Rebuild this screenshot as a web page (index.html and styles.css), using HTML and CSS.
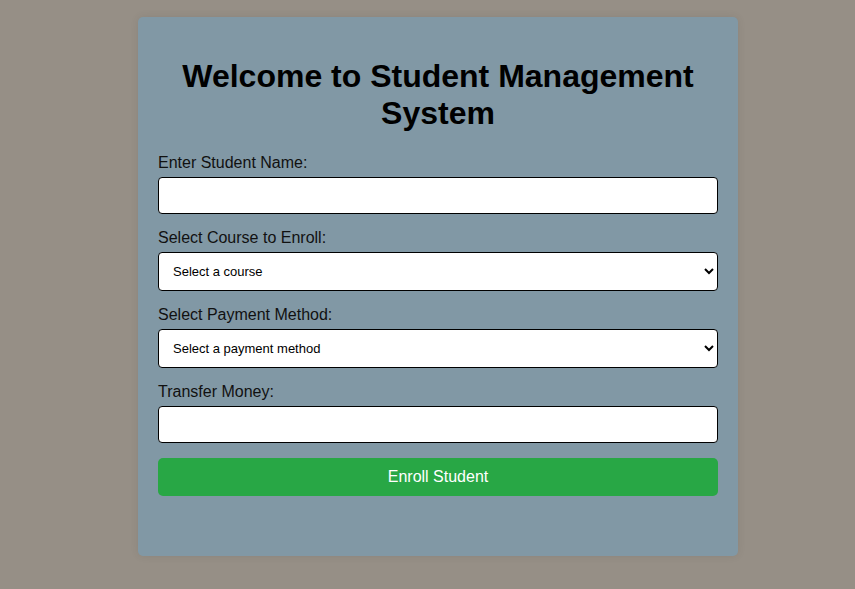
FILE: index.html
```html
<!DOCTYPE html>
<html lang="en">
<head>
<meta charset="utf-8">
<title>Student Management System</title>
<link rel="stylesheet" href="styles.css">
</head>
<body>
<div class="card">
  <h1 class="title">Welcome to Student Management System</h1>
  <form class="form">
    <label class="label" for="name">Enter Student Name:</label>
    <input class="field" type="text" id="name">
    <label class="label" for="course">Select Course to Enroll:</label>
    <select class="field select" id="course">
      <option>Select a course</option>
    </select>
    <label class="label" for="pay">Select Payment Method:</label>
    <select class="field select" id="pay">
      <option>Select a payment method</option>
    </select>
    <label class="label" for="money">Transfer Money:</label>
    <input class="field" type="text" id="money">
    <button class="btn" type="button">Enroll Student</button>
  </form>
</div>
</body>
</html>
```
FILE: styles.css
```css
html, body {
  margin: 0;
  padding: 0;
}
body {
  background: #968f86;
  font-family: "Liberation Sans", Arial, sans-serif;
  padding: 17px 0 0 21px;
  min-height: 589px;
  box-sizing: border-box;
}
.card {
  width: 600px;
  margin: 0 auto;
  box-sizing: border-box;
  background: #8198a5;
  border-radius: 5px;
  padding: 20px 20px 60px;
  box-shadow: 0 0 8px rgba(0, 0, 0, 0.08);
}
.title {
  font-size: 32px;
  font-weight: bold;
  text-align: center;
  margin: 21px 0 22px;
  color: #000;
  line-height: 37px;
}
.form {
  display: flex;
  flex-direction: column;
}
.label {
  font-size: 16px;
  line-height: 18px;
  color: #111;
  margin-bottom: 5px;
}
.field {
  box-sizing: border-box;
  width: 100%;
  height: 37px;
  padding: 10px;
  border: 1px solid #000;
  border-radius: 4px;
  background: #fff;
  font-family: "Liberation Sans", Arial, sans-serif;
  font-size: 13px;
  margin: 0 0 15px;
}
.select {
  height: 39px;
  color: #000;
}
.btn {
  height: 38px;
  width: 100%;
  margin-top: 0;
  background: #28a745;
  color: #fff;
  border: none;
  border-radius: 5px;
  font-family: "Liberation Sans", Arial, sans-serif;
  font-size: 16px;
}
```
